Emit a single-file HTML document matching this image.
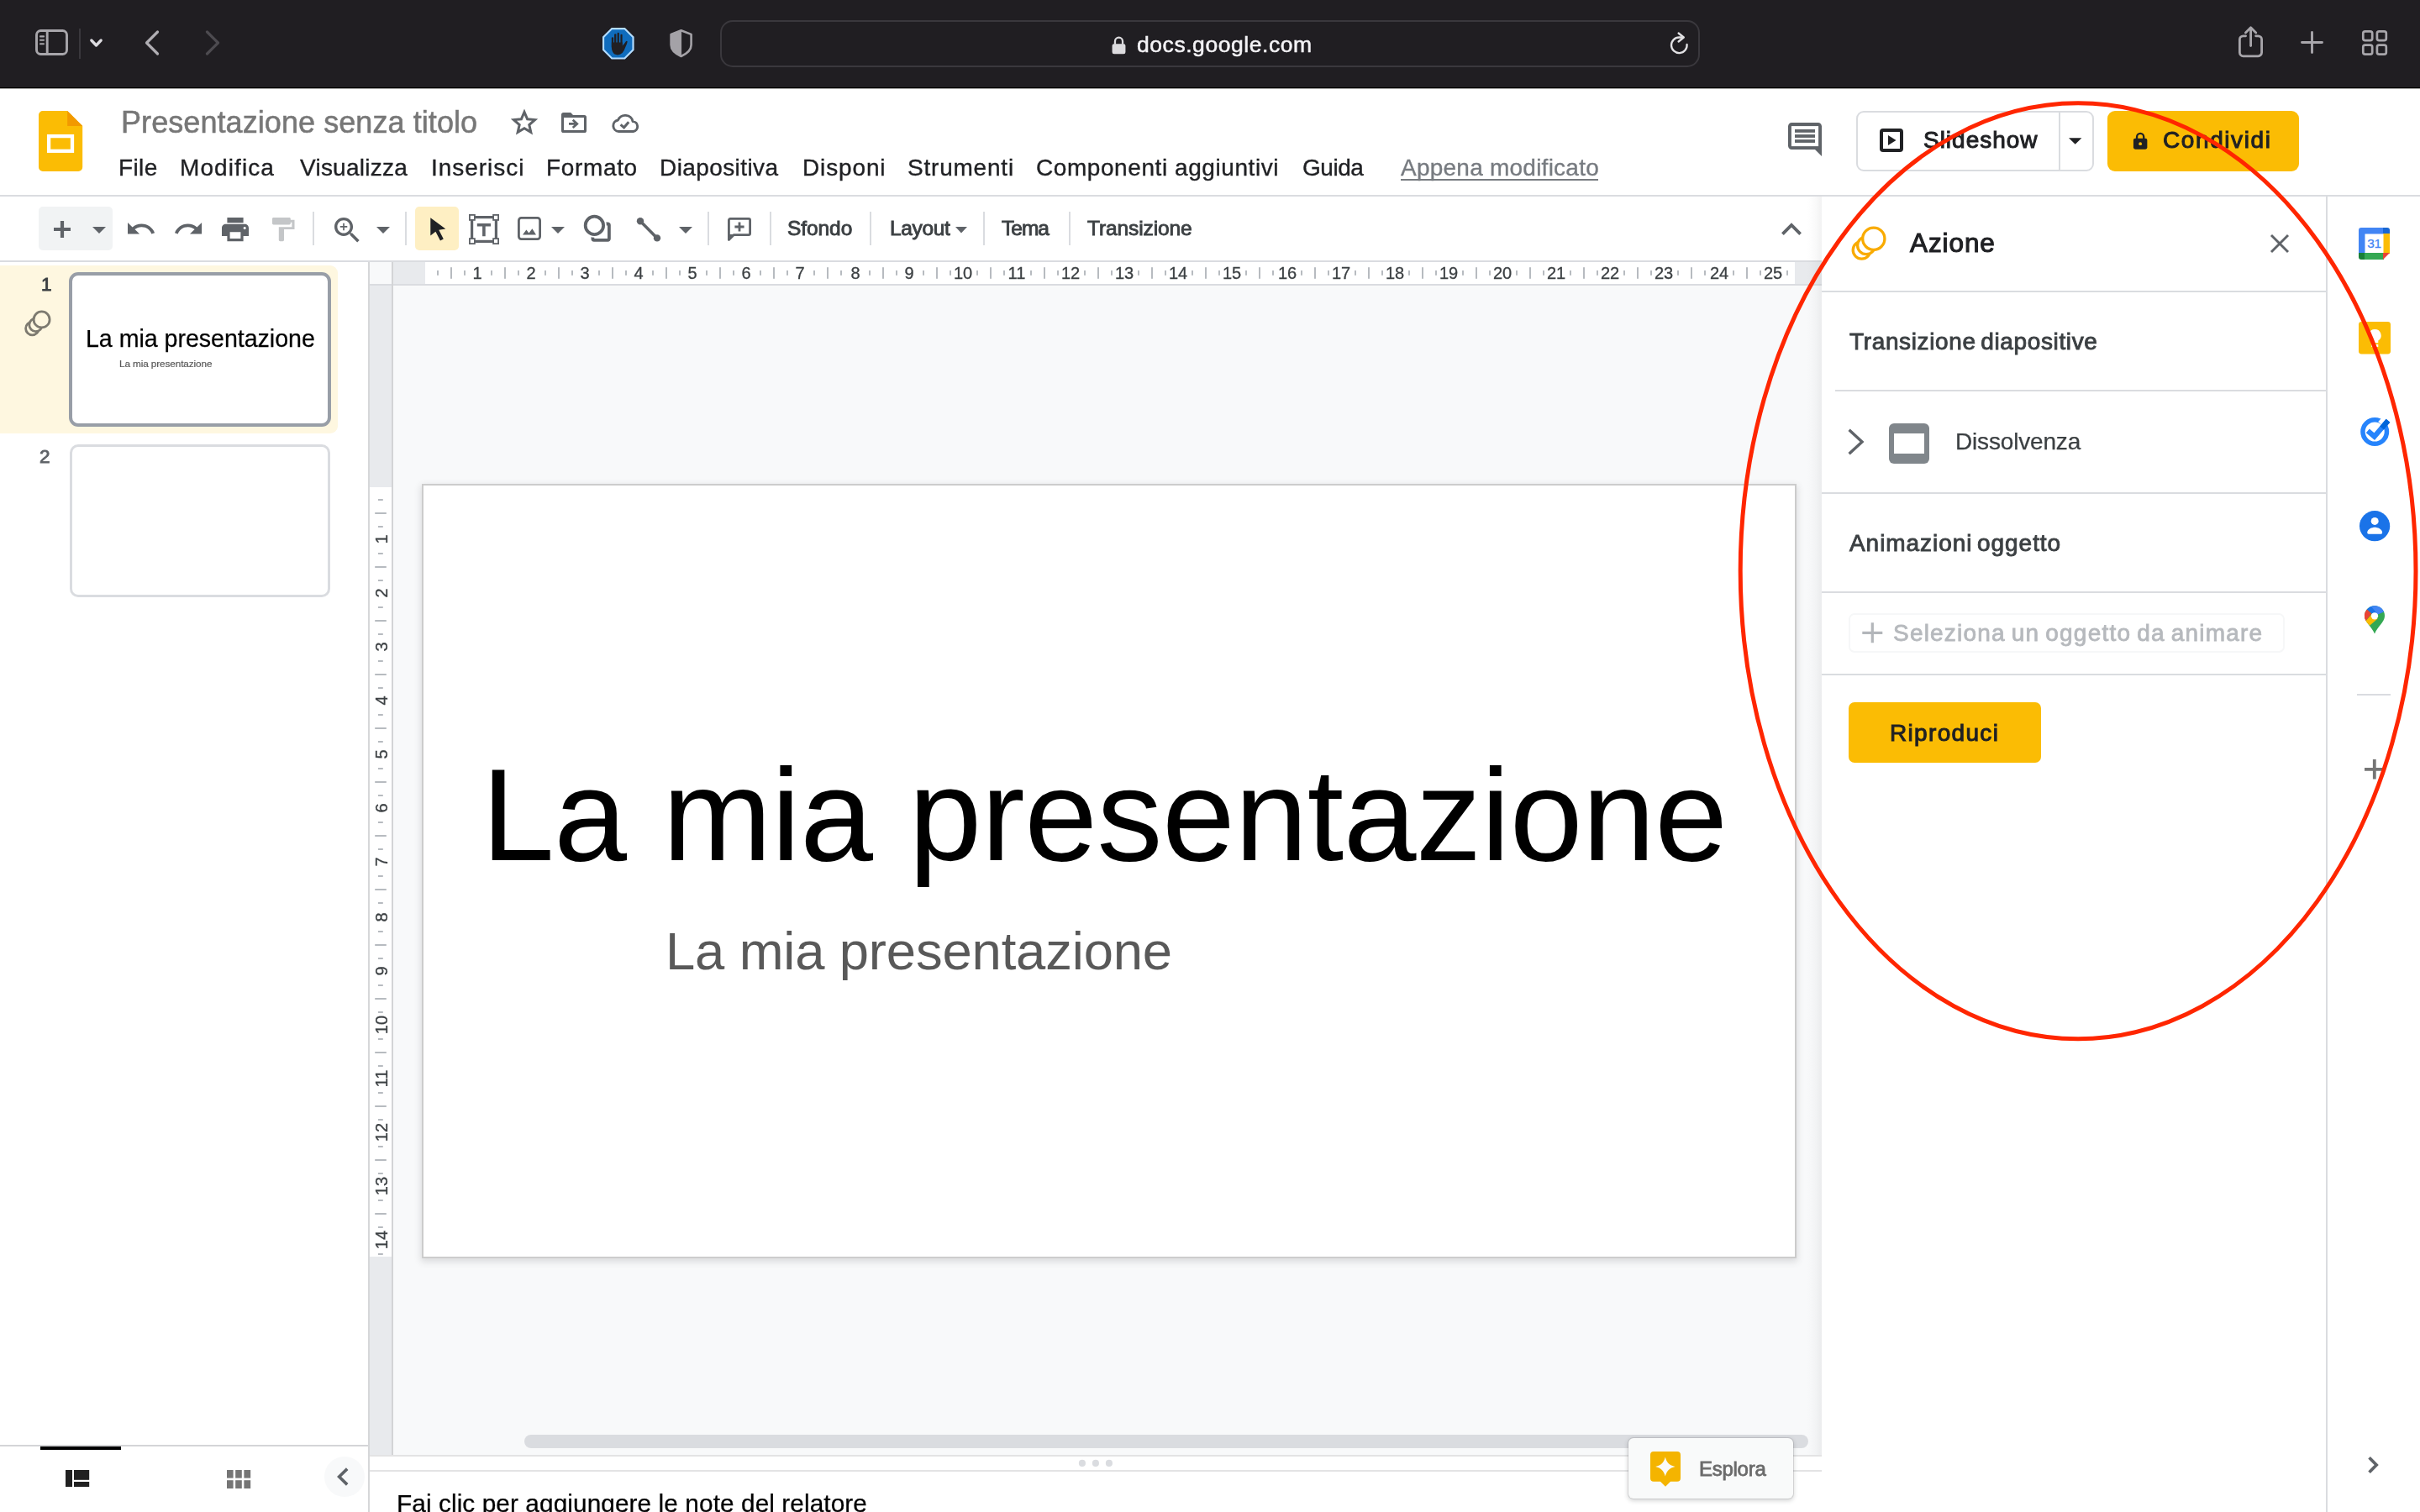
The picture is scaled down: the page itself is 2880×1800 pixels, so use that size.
<!DOCTYPE html>
<html lang="it">
<head>
<meta charset="utf-8">
<title>Presentazione senza titolo - Presentazioni Google</title>
<style>
html,body{margin:0;padding:0;}
body{width:2880px;height:1800px;overflow:hidden;position:relative;background:#fff;font-family:"Liberation Sans",sans-serif;color:#202124;}
.a{position:absolute;}
.t{position:absolute;white-space:pre;font-family:"Liberation Sans",sans-serif;will-change:transform;}
svg{position:absolute;overflow:visible;}
.sep{position:absolute;width:2px;background:#dadce0;top:252px;height:40px;}
.hl{position:absolute;height:2px;background:#dadce0;}
</style>
</head>
<body>
<!-- ============ Safari chrome ============ -->
<div class="a" style="left:0;top:0;width:2880px;height:104px;background:#201e22;"></div>
<div class="a" style="left:0;top:104px;width:2880px;height:1px;background:#000;"></div>
<div class="a" style="left:0;top:105px;width:2880px;height:1px;background:#a8a8a8;"></div>
<!-- sidebar icon -->
<svg style="left:41.8px;top:35.4px" width="39" height="31" viewBox="0 0 39 31" fill="none" stroke="#a8a6ab" stroke-width="2.9">
  <rect x="1.5" y="1.5" width="36" height="28" rx="5"/>
  <line x1="14.2" y1="2" x2="14.2" y2="29"/>
  <g stroke-width="2.1" stroke-linecap="round"><line x1="6" y1="8.4" x2="10" y2="8.4"/><line x1="6" y1="12.8" x2="10" y2="12.8"/><line x1="6" y1="17.2" x2="10" y2="17.2"/></g>
</svg>
<div class="a" style="left:94px;top:34px;width:2px;height:36px;background:#3a383d;"></div>
<svg style="left:106.6px;top:46.4px" width="15" height="11" viewBox="0 0 15 11" fill="none" stroke="#dddce0" stroke-width="3.3" stroke-linecap="round" stroke-linejoin="round"><path d="M1.8 2 L7.5 8 L13.2 2"/></svg>
<svg style="left:172px;top:36px" width="18" height="30" viewBox="0 0 18 30" fill="none" stroke="#b0aeb3" stroke-width="3.2" stroke-linecap="round" stroke-linejoin="round"><path d="M15.5 2 L2.5 15 L15.5 28"/></svg>
<svg style="left:244px;top:36px" width="18" height="30" viewBox="0 0 18 30" fill="none" stroke="#4d4b50" stroke-width="3.2" stroke-linecap="round" stroke-linejoin="round"><path d="M2.5 2 L15.5 15 L2.5 28"/></svg>
<!-- adblock octagon -->
<svg style="left:717.3px;top:33.3px" width="37.6" height="37.6" viewBox="0 0 38.2 38.2">
  <polygon points="11.4,1.1 26.8,1.1 37.1,11.4 37.1,26.8 26.8,37.1 11.4,37.1 1.1,26.8 1.1,11.4" fill="#0f6cbd" stroke="#b3dcff" stroke-width="2.2" stroke-linejoin="miter"/>
  <g fill="#211f23"><rect x="11" y="11.5" width="2.3" height="13" rx="1.15"/><rect x="14.3" y="7.3" width="2.3" height="14" rx="1.15"/><rect x="17.9" y="5.9" width="2.3" height="15" rx="1.15"/><rect x="21.8" y="7.8" width="2.2" height="14" rx="1.1"/>
  <path d="M11 17.8 H24 V21.8 Q26.5 19.6 28.2 16.8 Q29.4 15.2 30.1 16.4 Q30.2 18 27.9 23 Q26.2 28 24 30.4 Q21.5 32.9 18.3 32.9 Q14 32.9 12.2 29 Q11 26.5 11 23 Z"/></g>
</svg>
<!-- shield -->
<svg style="left:796px;top:34px" width="30" height="35" viewBox="0 0 30 35">
  <path d="M14.6 2.2 L26.6 6.9 V19.5 C26.6 25 22 29.6 14.6 33 C7.2 29.6 2.6 25 2.6 19.5 V6.9 Z" fill="none" stroke="#a4a2a7" stroke-width="2.6" stroke-linejoin="round"/>
  <path d="M14.6 2.2 L2.6 6.9 V19.5 C2.6 25 7.2 29.6 14.6 33 Z" fill="#a4a2a7" stroke="#a4a2a7" stroke-width="1" stroke-linejoin="round"/>
</svg>
<!-- URL field -->
<div class="a" style="left:857px;top:24px;width:1166px;height:56px;box-sizing:border-box;border:2px solid #3a383d;border-radius:15px;background:#201e22;"></div>
<svg style="left:1323.3px;top:41.6px" width="17" height="23.4" viewBox="0 0 18 24"><path d="M4.2 11 V7.2 a4.8 4.8 0 0 1 9.6 0 V11" fill="none" stroke="#dcdbde" stroke-width="2.4"/><rect x="0.6" y="10.4" width="16.8" height="12.8" rx="2.4" fill="#dcdbde"/></svg>
<div class="t" style="left:1353.0px;top:40.37px;font-size:26.5px;line-height:26.5px;letter-spacing:0.550px;color:#f4f3f6;-webkit-text-stroke:0.5px #f4f3f6;">docs.google.com</div>
<svg style="left:1987px;top:38px" width="24" height="28" viewBox="0 0 24 28" fill="none" stroke="#e2e1e4" stroke-width="2.3" stroke-linecap="round" stroke-linejoin="round">
  <path d="M20.55 14.8 A9.3 9.3 0 1 1 11.3 6.5 H16"/><path d="M10.6 1.5 L16.8 6.5 L10.6 11.5"/>
</svg>
<!-- share -->
<svg style="left:2663px;top:29.6px" width="32" height="40" viewBox="0 0 32 40" fill="none" stroke="#a8a6ab" stroke-width="2.8" stroke-linecap="round" stroke-linejoin="round">
  <path d="M9.6 12.8 H6.6 a4.2 4.2 0 0 0 -4.2 4.2 V32.6 a4.2 4.2 0 0 0 4.2 4.2 H24.4 a4.2 4.2 0 0 0 4.2 -4.2 V17 a4.2 4.2 0 0 0 -4.2 -4.2 H21.6"/>
  <path d="M15.6 24.6 V3.4"/><path d="M9.4 9 L15.6 2.8 L21.8 9"/>
</svg>
<svg style="left:2737px;top:36px" width="29" height="29" viewBox="0 0 29 29" fill="none" stroke="#a8a6ab" stroke-width="2.9" stroke-linecap="round"><path d="M14.5 2.5 V26.5 M2.5 14.5 H26.5"/></svg>
<svg style="left:2810px;top:35px" width="32" height="32" viewBox="0 0 32 32" fill="none" stroke="#a8a6ab" stroke-width="2.7">
  <rect x="2.3" y="2.3" width="10.9" height="10.9" rx="2.4"/><rect x="18.9" y="2.3" width="10.9" height="10.9" rx="2.4"/><rect x="2.3" y="18.7" width="10.9" height="10.9" rx="2.4"/><rect x="18.9" y="18.7" width="10.9" height="10.9" rx="2.4"/>
</svg>
<!-- ============ Docs header ============ -->
<div class="hl" style="left:0;top:232px;width:2880px;"></div>
<!-- slides logo -->
<svg style="left:46px;top:132px" width="52.2" height="72" viewBox="0 0 52.2 72">
  <path d="M5 0 H34.2 L52.2 18 V67 a5 5 0 0 1 -5 5 H5 a5 5 0 0 1 -5 -5 V5 a5 5 0 0 1 5 -5 Z" fill="#fbbc04"/>
  <path d="M34.2 0 L52.2 18 H34.2 Z" fill="#f29900"/>
  <rect x="12.1" y="30.1" width="27.9" height="17.7" fill="none" stroke="#fff" stroke-width="4.3"/>
</svg>
<div class="t" style="left:144.0px;top:127.93px;font-size:36px;line-height:36px;letter-spacing:0.072px;color:#777;-webkit-text-stroke:0.55px #777;">Presentazione senza titolo</div>
<!-- star -->
<svg style="left:608px;top:130.2px" width="32" height="30" viewBox="0 0 32 30" fill="none" stroke="#5f6368" stroke-width="3" stroke-linejoin="miter"><path d="M16 3.4 L19.6 11.8 L28.6 12.6 L21.8 18.6 L23.8 27.4 L16 22.8 L8.2 27.4 L10.2 18.6 L3.4 12.6 L12.4 11.8 Z"/></svg>
<!-- folder move -->
<svg style="left:668px;top:134px" width="30" height="24" viewBox="0 0 30 24"><path d="M2.6 0 H11.2 L14 3 H27.4 a2.6 2.6 0 0 1 2.6 2.6 V21.4 a2.6 2.6 0 0 1 -2.6 2.6 H2.6 a2.6 2.6 0 0 1 -2.6 -2.6 V2.6 a2.6 2.6 0 0 1 2.6 -2.6 Z M3 6 V21 H27 V6 Z" fill="#5f6368" fill-rule="evenodd"/><path d="M9 12 H16.4 V14.8 H9 Z M14.6 7.8 L20.8 13.4 L14.6 19 L12.8 17 L16.8 13.4 L12.8 9.8 Z" fill="#5f6368"/></svg>
<!-- cloud done -->
<svg style="left:727.6px;top:135px" width="33" height="23" viewBox="0 0 33 23" fill="none" stroke="#5f6368" stroke-width="2.9" stroke-linejoin="round"><path d="M8.3 21.5 a6.8 6.8 0 0 1 -0.8 -13.5 a9.3 9.3 0 0 1 17.6 1.6 a6 6 0 0 1 0.6 11.9 Z"/><path d="M10.6 13.4 L14.6 16.8 L20.2 10.2" stroke-linejoin="miter" stroke-width="3"/></svg>
<!-- menus -->
<div class="t" style="left:141.0px;top:186.10px;font-size:28px;line-height:28px;letter-spacing:0.400px;-webkit-text-stroke:0.35px #202124;">File</div>
<div class="t" style="left:214.4px;top:186.10px;font-size:28px;line-height:28px;letter-spacing:1.086px;-webkit-text-stroke:0.35px #202124;">Modifica</div>
<div class="t" style="left:356.8px;top:186.10px;font-size:28px;line-height:28px;letter-spacing:0.244px;-webkit-text-stroke:0.35px #202124;">Visualizza</div>
<div class="t" style="left:513.0px;top:186.10px;font-size:28px;line-height:28px;letter-spacing:0.975px;-webkit-text-stroke:0.35px #202124;">Inserisci</div>
<div class="t" style="left:649.6px;top:186.10px;font-size:28px;line-height:28px;letter-spacing:0.650px;-webkit-text-stroke:0.35px #202124;">Formato</div>
<div class="t" style="left:785.2px;top:186.10px;font-size:28px;line-height:28px;letter-spacing:0.410px;-webkit-text-stroke:0.35px #202124;">Diapositiva</div>
<div class="t" style="left:955.0px;top:186.10px;font-size:28px;line-height:28px;letter-spacing:0.867px;-webkit-text-stroke:0.35px #202124;">Disponi</div>
<div class="t" style="left:1080.3px;top:186.10px;font-size:28px;line-height:28px;letter-spacing:0.787px;-webkit-text-stroke:0.35px #202124;">Strumenti</div>
<div class="t" style="left:1233.4px;top:186.10px;font-size:28px;line-height:28px;letter-spacing:0.570px;-webkit-text-stroke:0.35px #202124;">Componenti aggiuntivi</div>
<div class="t" style="left:1550.0px;top:186.10px;font-size:28px;line-height:28px;letter-spacing:-0.475px;-webkit-text-stroke:0.35px #202124;">Guida</div>
<div class="t" style="left:1666.8px;top:186.10px;font-size:28px;line-height:28px;letter-spacing:0.237px;color:#777b80;-webkit-text-stroke:0.35px #777b80;">Appena modificato</div>
<div class="a" style="left:1667px;top:213px;width:235px;height:2px;background:#777b80;"></div>
<!-- comments icon -->
<svg style="left:2128px;top:146px" width="40" height="40" viewBox="0 0 40 40"><path d="M4.4 0 H35.6 a4.4 4.4 0 0 1 4.4 4.4 V39.9 L32 32 H4.4 a4.4 4.4 0 0 1 -4.4 -4.4 V4.4 a4.4 4.4 0 0 1 4.4 -4.4 Z" fill="#5f6368"/><rect x="3.9" y="4.1" width="32.2" height="24" fill="#fff"/><g fill="#5f6368"><rect x="8" y="8" width="24" height="3.8"/><rect x="8" y="14.1" width="24" height="3.8"/><rect x="8" y="20.1" width="24" height="3.8"/></g></svg>
<!-- slideshow button -->
<div class="a" style="left:2209px;top:132px;width:283px;height:72px;box-sizing:border-box;border:2px solid #dadce0;border-radius:9px;background:#fff;"></div>
<div class="a" style="left:2450px;top:133px;width:2px;height:70px;background:#dadce0;"></div>
<svg style="left:2237px;top:153px" width="28" height="28" viewBox="0 0 28 28"><rect x="2" y="2" width="24" height="24" rx="2" fill="none" stroke="#202124" stroke-width="4"/><path d="M10 8.1 L19.5 14 L10 19.9 Z" fill="#202124"/></svg>
<div class="t" style="left:2288.9px;top:153.30px;font-size:28px;line-height:28px;letter-spacing:0.988px;color:#202124;-webkit-text-stroke:1px #202124;">Slideshow</div>
<svg style="left:2462.4px;top:163.6px" width="15.4" height="8" viewBox="0 0 16 8"><path d="M0 0 H16 L8 8 Z" fill="#202124"/></svg>
<!-- share button -->
<div class="a" style="left:2508px;top:132px;width:228px;height:72px;border-radius:9px;background:#fbbc04;"></div>
<svg style="left:2538px;top:156.6px" width="18.3" height="21.4" viewBox="0 0 20 24"><path d="M5.4 9.5 V6.6 a4.6 4.6 0 0 1 9.2 0 V9.5" fill="none" stroke="#202124" stroke-width="2.6"/><rect x="0.8" y="8.6" width="18.4" height="14.6" rx="2.4" fill="#202124"/><circle cx="10" cy="15.9" r="2.1" fill="#fbbc04"/></svg>
<div class="t" style="left:2573.8px;top:153.30px;font-size:28px;line-height:28px;letter-spacing:1.587px;color:#202124;-webkit-text-stroke:1px #202124;">Condividi</div>
<!-- ============ Toolbar ============ -->
<div class="hl" style="left:0;top:310px;width:2168px;"></div>
<div class="a" style="left:46px;top:246px;width:88px;height:52px;border-radius:5px;background:#f1f3f4;"></div>
<svg style="left:64px;top:263px" width="20" height="20" viewBox="0 0 20 20"><path d="M7.9 0 H12.1 V7.9 H20 V12.1 H12.1 V20 H7.9 V12.1 H0 V7.9 H7.9 Z" fill="#5f6368"/></svg>
<svg style="left:110px;top:269.8px" width="16" height="8" viewBox="0 0 16 8"><path d="M0 0 H16 L8 8 Z" fill="#5f6368"/></svg>
<!-- undo / redo -->
<svg style="left:151.8px;top:265px" width="32.1" height="14.3" viewBox="2 7 20.47 9.5" preserveAspectRatio="none"><path d="M12.5 8c-2.65 0-5.05.99-6.9 2.6L2 7v9h9l-3.62-3.62c1.39-1.16 3.16-1.88 5.12-1.88 3.54 0 6.55 2.31 7.6 5.5l2.37-.78C21.08 11.03 17.15 8 12.5 8z" fill="#5f6368"/></svg>
<svg style="left:207.9px;top:265px" width="32.1" height="14.3" viewBox="1.54 7 20.46 9.5" preserveAspectRatio="none"><path d="M18.4 10.6C16.55 8.99 14.15 8 11.5 8c-4.65 0-8.58 3.03-9.96 7.22L3.9 16c1.05-3.19 4.05-5.5 7.6-5.5 1.95 0 3.73.72 5.12 1.88L13 16h9V7l-3.6 3.6z" fill="#5f6368"/></svg>
<!-- print -->
<svg style="left:264px;top:258.8px" width="32" height="28.2" viewBox="2 3 20 18" preserveAspectRatio="none"><path d="M19 8H5c-1.66 0-3 1.34-3 3v6h4v4h12v-4h4v-6c0-1.66-1.34-3-3-3zm-3 11H8v-5h8v5zm3-7c-.55 0-1-.45-1-1s.45-1 1-1 1 .45 1 1-.45 1-1 1zm-1-9H6v4h12V3z" fill="#5f6368"/></svg>
<!-- paint format (disabled) -->
<svg style="left:323.8px;top:258.8px" width="26.5" height="28.2" viewBox="4 2 17 20" preserveAspectRatio="none"><path d="M18 4V3c0-.55-.45-1-1-1H5c-.55 0-1 .45-1 1v4c0 .55.45 1 1 1h12c.55 0 1-.45 1-1V6h1v4H9v11c0 .55.45 1 1 1h2c.55 0 1-.45 1-1v-9h8V4h-3z" fill="#c4c6c8"/></svg>
<div class="sep" style="left:372px;"></div>
<!-- zoom -->
<svg style="left:397.8px;top:258.8px" width="29.7" height="29.5" viewBox="3 3 17.49 17.49" preserveAspectRatio="none"><path d="M15.5 14h-.79l-.28-.27C15.41 12.59 16 11.11 16 9.5 16 5.91 13.09 3 9.5 3S3 5.91 3 9.5 5.91 16 9.5 16c1.61 0 3.09-.59 4.23-1.57l.27.28v.79l5 4.99L20.49 19l-4.99-5zm-6 0C7.01 14 5 11.99 5 9.5S7.01 5 9.5 5 14 7.01 14 9.5 11.99 14 9.5 14z M12 10h-2v2H9v-2H7V9h2V7h1v2h2v1z" fill="#5f6368"/></svg>
<svg style="left:447.8px;top:269.8px" width="16" height="8" viewBox="0 0 16 8"><path d="M0 0 H16 L8 8 Z" fill="#5f6368"/></svg>
<div class="sep" style="left:482px;"></div>
<!-- select (active) -->
<div class="a" style="left:494px;top:246px;width:52px;height:52px;border-radius:5px;background:#feefc3;"></div>
<svg style="left:511.7px;top:258.8px" width="18.5" height="28.2" viewBox="0 0 18.5 28.2"><path d="M0.3 0.2 L18.3 13.6 L10.3 14.8 L15.8 25.4 L12 27.6 L6.4 16.8 L0.3 21.6 Z" fill="#202124"/></svg>
<!-- text box -->
<svg style="left:558px;top:255px" width="36" height="36" viewBox="0 0 36 36"><rect x="3.6" y="3.6" width="28.8" height="28.8" fill="none" stroke="#5f6368" stroke-width="3.2"/><g fill="#fff" stroke="#5f6368" stroke-width="1.8"><rect x="0.9" y="0.9" width="6" height="6"/><rect x="29.1" y="0.9" width="6" height="6"/><rect x="0.9" y="29.1" width="6" height="6"/><rect x="29.1" y="29.1" width="6" height="6"/></g><path d="M9.8 11 H26 V14.4 H19.7 V26.2 H16.1 V14.4 H9.8 Z" fill="#5f6368"/></svg>
<!-- image -->
<svg style="left:616px;top:258px" width="28" height="28" viewBox="0 0 28 28"><rect x="1.4" y="1.4" width="25.2" height="25.2" rx="3" fill="none" stroke="#5f6368" stroke-width="2.8"/><path d="M6 21.6 L10.4 15.6 L13.4 19.4 L17.4 14.2 L22 21.6 Z" fill="#5f6368"/></svg>
<svg style="left:656px;top:269.8px" width="16" height="8" viewBox="0 0 16 8"><path d="M0 0 H16 L8 8 Z" fill="#5f6368"/></svg>
<!-- shape -->
<svg style="left:694px;top:255px" width="34" height="34" viewBox="0 0 34 34" fill="none" stroke="#5f6368" stroke-width="3.8"><path d="M25 11.5 H29.4 a1.5 1.5 0 0 1 1.5 1.5 V29.3 a1.5 1.5 0 0 1 -1.5 1.5 H12.9 a1.5 1.5 0 0 1 -1.5 -1.5 V24" stroke-linecap="butt"/><circle cx="13.4" cy="13.4" r="10.7" stroke="#fff" stroke-width="7.4"/><circle cx="13.4" cy="13.4" r="10.7"/></svg>
<!-- line -->
<svg style="left:757px;top:257.5px" width="30" height="30" viewBox="0 0 30 30"><line x1="5" y1="5.2" x2="25" y2="25.4" stroke="#5f6368" stroke-width="3.6"/><circle cx="5" cy="5.2" r="4.2" fill="#5f6368"/><circle cx="25" cy="25.4" r="4.2" fill="#5f6368"/></svg>
<svg style="left:808px;top:269.8px" width="16" height="8" viewBox="0 0 16 8"><path d="M0 0 H16 L8 8 Z" fill="#5f6368"/></svg>
<div class="sep" style="left:842px;"></div>
<!-- add comment -->
<svg style="left:866px;top:258.8px" width="28" height="28.2" viewBox="0 0 28 28.2"><path d="M3 1.4 H25 a1.6 1.6 0 0 1 1.6 1.6 V19 a1.6 1.6 0 0 1 -1.6 1.6 H7.4 L1.4 26.6 V3 a1.6 1.6 0 0 1 1.6 -1.6 Z" fill="none" stroke="#5f6368" stroke-width="2.8" stroke-linejoin="round"/><path d="M1.4 27.6 V20 H9 Z" fill="#5f6368"/><path d="M12.6 5.4 H15.4 V9.6 H19.6 V12.4 H15.4 V16.6 H12.6 V12.4 H8.4 V9.6 H12.6 Z" fill="#5f6368"/></svg>
<div class="sep" style="left:916px;"></div>
<div class="t" style="left:937.4px;top:260.26px;font-size:24.5px;line-height:24.5px;letter-spacing:-0.080px;color:#3c4043;-webkit-text-stroke:0.9px #3c4043;">Sfondo</div>
<div class="sep" style="left:1035px;"></div>
<div class="t" style="left:1058.7px;top:260.26px;font-size:24.5px;line-height:24.5px;letter-spacing:-0.360px;color:#3c4043;-webkit-text-stroke:0.9px #3c4043;">Layout</div>
<svg style="left:1137px;top:270.4px" width="14" height="7.4" viewBox="0 0 14 7.4"><path d="M0 0 H14 L7 7.4 Z" fill="#5f6368"/></svg>
<div class="sep" style="left:1170px;"></div>
<div class="t" style="left:1192.0px;top:260.26px;font-size:24.5px;line-height:24.5px;letter-spacing:-1.000px;color:#3c4043;-webkit-text-stroke:0.9px #3c4043;">Tema</div>
<div class="sep" style="left:1272px;"></div>
<div class="t" style="left:1294.0px;top:260.26px;font-size:24.5px;line-height:24.5px;letter-spacing:-0.100px;color:#3c4043;-webkit-text-stroke:0.9px #3c4043;">Transizione</div>
<!-- collapse caret -->
<svg style="left:2120px;top:264.7px" width="24" height="15" viewBox="0 0 24 15" fill="none" stroke="#5f6368" stroke-width="3.8"><path d="M1.4 13.6 L12 3 L22.6 13.6"/></svg>
<!-- ============ Filmstrip ============ -->
<div class="a" style="left:0;top:316px;width:402px;height:200px;background:#fef7e0;border-radius:0 9px 9px 0;"></div>
<div class="t" style="left:48.5px;top:328.25px;font-size:22.5px;line-height:22.5px;color:#3c4043;-webkit-text-stroke:0.9px #3c4043;">1</div>
<svg style="left:28px;top:368px" width="34" height="34" viewBox="0 0 34 34" fill="#fef7e0" stroke="#7d7a70" stroke-width="2.8"><circle cx="10.4" cy="23" r="7.8"/><circle cx="14.6" cy="18.8" r="7.8"/><circle cx="21.6" cy="12.4" r="9.5"/></svg>
<div class="a" style="left:82px;top:324px;width:312px;height:184px;box-sizing:border-box;border:4px solid #989ea7;border-radius:11px;background:#fff;"></div>
<div class="t" style="left:101.8px;top:389.39px;font-size:28.6px;line-height:28.6px;letter-spacing:-0.032px;color:#000;-webkit-text-stroke:0.25px #000;">La mia presentazione</div>
<div class="t" style="left:141.8px;top:427.91px;font-size:11.8px;line-height:11.8px;letter-spacing:-0.121px;color:#595959;-webkit-text-stroke:0.2px #595959;">La mia presentazione</div>
<div class="t" style="left:47.2px;top:532.95px;font-size:22.5px;line-height:22.5px;color:#5f6368;-webkit-text-stroke:0.9px #5f6368;">2</div>
<div class="a" style="left:83px;top:529px;width:310px;height:182px;box-sizing:border-box;border:3px solid #dadce0;border-radius:10px;background:#fff;"></div>
<!-- filmstrip bottom bar -->
<div class="hl" style="left:0;top:1719.5px;width:438px;background:#d4d5d7;"></div>
<div class="a" style="left:48px;top:1722px;width:96px;height:4px;background:#000;"></div>
<svg style="left:78px;top:1750px" width="28.2" height="20" viewBox="0 0 28.2 20" fill="#212121"><rect x="0" y="0" width="8" height="20"/><rect x="10" y="0" width="18.2" height="11.8"/><rect x="10" y="14" width="18.2" height="6"/></svg>
<svg style="left:270px;top:1750px" width="28.2" height="22" viewBox="0 0 28.2 22" fill="#757575"><rect x="0" y="0" width="7.6" height="9.6"/><rect x="10.2" y="0" width="7.6" height="9.6"/><rect x="20.4" y="0" width="7.8" height="9.6"/><rect x="0" y="12.2" width="7.6" height="9.8"/><rect x="10.2" y="12.2" width="7.6" height="9.8"/><rect x="20.4" y="12.2" width="7.8" height="9.8"/></svg>
<div class="a" style="left:386px;top:1734px;width:48px;height:48px;border-radius:50%;background:#f8f9fa;"></div>
<svg style="left:400px;top:1746px" width="16" height="24" viewBox="0 0 16 24" fill="none" stroke="#5f6368" stroke-width="3.6"><path d="M13.2 2.6 L3.6 12 L13.2 21.4"/></svg>
<!-- divider -->
<div class="a" style="left:438px;top:312px;width:2px;height:1488px;background:#d6d7d9;"></div>
<!-- ============ Canvas area ============ -->
<div class="a" style="left:440px;top:312px;width:1728px;height:1421px;background:#f8f9fa;"></div>
<div class="a" style="left:468px;top:312px;width:1700px;height:26px;background:#e8eaed;"></div>
<div class="a" style="left:506px;top:312px;width:1630px;height:26px;background:#fff;"></div>
<div class="hl" style="left:440px;top:338px;width:1728px;background:#dadce0;"></div>
<div class="a" style="left:440px;top:340px;width:26px;height:1393px;background:#e8eaed;"></div>
<div class="a" style="left:440px;top:580px;width:26px;height:916px;background:#fff;"></div>
<div class="a" style="left:466px;top:312px;width:2px;height:1421px;background:#d3d4d6;"></div>
<svg style="left:0;top:0" width="2880" height="1800" viewBox="0 0 2880 1800"><g fill="#b7bbc0"><rect x="520" y="322" width="2" height="5.8"/><rect x="536" y="318.2" width="2" height="13.6"/><rect x="552" y="322" width="2" height="5.8"/><rect x="584" y="322" width="2" height="5.8"/><rect x="600" y="318.2" width="2" height="13.6"/><rect x="616" y="322" width="2" height="5.8"/><rect x="648" y="322" width="2" height="5.8"/><rect x="664" y="318.2" width="2" height="13.6"/><rect x="680" y="322" width="2" height="5.8"/><rect x="712" y="322" width="2" height="5.8"/><rect x="728" y="318.2" width="2" height="13.6"/><rect x="744" y="322" width="2" height="5.8"/><rect x="776" y="322" width="2" height="5.8"/><rect x="792" y="318.2" width="2" height="13.6"/><rect x="808" y="322" width="2" height="5.8"/><rect x="840" y="322" width="2" height="5.8"/><rect x="856" y="318.2" width="2" height="13.6"/><rect x="872" y="322" width="2" height="5.8"/><rect x="904" y="322" width="2" height="5.8"/><rect x="920" y="318.2" width="2" height="13.6"/><rect x="936" y="322" width="2" height="5.8"/><rect x="968" y="322" width="2" height="5.8"/><rect x="984" y="318.2" width="2" height="13.6"/><rect x="1000" y="322" width="2" height="5.8"/><rect x="1034" y="322" width="2" height="5.8"/><rect x="1050" y="318.2" width="2" height="13.6"/><rect x="1066" y="322" width="2" height="5.8"/><rect x="1098" y="322" width="2" height="5.8"/><rect x="1114" y="318.2" width="2" height="13.6"/><rect x="1130" y="322" width="2" height="5.8"/><rect x="1162" y="322" width="2" height="5.8"/><rect x="1178" y="318.2" width="2" height="13.6"/><rect x="1194" y="322" width="2" height="5.8"/><rect x="1226" y="322" width="2" height="5.8"/><rect x="1242" y="318.2" width="2" height="13.6"/><rect x="1258" y="322" width="2" height="5.8"/><rect x="1290" y="322" width="2" height="5.8"/><rect x="1306" y="318.2" width="2" height="13.6"/><rect x="1322" y="322" width="2" height="5.8"/><rect x="1354" y="322" width="2" height="5.8"/><rect x="1370" y="318.2" width="2" height="13.6"/><rect x="1386" y="322" width="2" height="5.8"/><rect x="1418" y="322" width="2" height="5.8"/><rect x="1434" y="318.2" width="2" height="13.6"/><rect x="1450" y="322" width="2" height="5.8"/><rect x="1482" y="322" width="2" height="5.8"/><rect x="1498" y="318.2" width="2" height="13.6"/><rect x="1514" y="322" width="2" height="5.8"/><rect x="1548" y="322" width="2" height="5.8"/><rect x="1564" y="318.2" width="2" height="13.6"/><rect x="1580" y="322" width="2" height="5.8"/><rect x="1612" y="322" width="2" height="5.8"/><rect x="1628" y="318.2" width="2" height="13.6"/><rect x="1644" y="322" width="2" height="5.8"/><rect x="1676" y="322" width="2" height="5.8"/><rect x="1692" y="318.2" width="2" height="13.6"/><rect x="1708" y="322" width="2" height="5.8"/><rect x="1740" y="322" width="2" height="5.8"/><rect x="1756" y="318.2" width="2" height="13.6"/><rect x="1772" y="322" width="2" height="5.8"/><rect x="1804" y="322" width="2" height="5.8"/><rect x="1820" y="318.2" width="2" height="13.6"/><rect x="1836" y="322" width="2" height="5.8"/><rect x="1868" y="322" width="2" height="5.8"/><rect x="1884" y="318.2" width="2" height="13.6"/><rect x="1900" y="322" width="2" height="5.8"/><rect x="1932" y="322" width="2" height="5.8"/><rect x="1948" y="318.2" width="2" height="13.6"/><rect x="1964" y="322" width="2" height="5.8"/><rect x="1996" y="322" width="2" height="5.8"/><rect x="2012" y="318.2" width="2" height="13.6"/><rect x="2028" y="322" width="2" height="5.8"/><rect x="2062" y="322" width="2" height="5.8"/><rect x="2078" y="318.2" width="2" height="13.6"/><rect x="2094" y="322" width="2" height="5.8"/><rect x="2126" y="322" width="2" height="5.8"/><rect x="450" y="594" width="5.8" height="2"/><rect x="446.2" y="610" width="13.6" height="2"/><rect x="450" y="626" width="5.8" height="2"/><rect x="450" y="658" width="5.8" height="2"/><rect x="446.2" y="674" width="13.6" height="2"/><rect x="450" y="690" width="5.8" height="2"/><rect x="450" y="722" width="5.8" height="2"/><rect x="446.2" y="738" width="13.6" height="2"/><rect x="450" y="754" width="5.8" height="2"/><rect x="450" y="786" width="5.8" height="2"/><rect x="446.2" y="802" width="13.6" height="2"/><rect x="450" y="818" width="5.8" height="2"/><rect x="450" y="850" width="5.8" height="2"/><rect x="446.2" y="866" width="13.6" height="2"/><rect x="450" y="882" width="5.8" height="2"/><rect x="450" y="914" width="5.8" height="2"/><rect x="446.2" y="930" width="13.6" height="2"/><rect x="450" y="946" width="5.8" height="2"/><rect x="450" y="978" width="5.8" height="2"/><rect x="446.2" y="994" width="13.6" height="2"/><rect x="450" y="1010" width="5.8" height="2"/><rect x="450" y="1042" width="5.8" height="2"/><rect x="446.2" y="1058" width="13.6" height="2"/><rect x="450" y="1074" width="5.8" height="2"/><rect x="450" y="1108" width="5.8" height="2"/><rect x="446.2" y="1124" width="13.6" height="2"/><rect x="450" y="1140" width="5.8" height="2"/><rect x="450" y="1172" width="5.8" height="2"/><rect x="446.2" y="1188" width="13.6" height="2"/><rect x="450" y="1204" width="5.8" height="2"/><rect x="450" y="1236" width="5.8" height="2"/><rect x="446.2" y="1252" width="13.6" height="2"/><rect x="450" y="1268" width="5.8" height="2"/><rect x="450" y="1300" width="5.8" height="2"/><rect x="446.2" y="1316" width="13.6" height="2"/><rect x="450" y="1332" width="5.8" height="2"/><rect x="450" y="1364" width="5.8" height="2"/><rect x="446.2" y="1380" width="13.6" height="2"/><rect x="450" y="1396" width="5.8" height="2"/><rect x="450" y="1428" width="5.8" height="2"/><rect x="446.2" y="1444" width="13.6" height="2"/><rect x="450" y="1460" width="5.8" height="2"/><rect x="450" y="1492" width="5.8" height="2"/></g><g font-family="Liberation Sans, sans-serif" font-size="20" fill="#3c4043" stroke="#3c4043" stroke-width="0.3" text-anchor="middle"><text x="568" y="332">1</text><text x="632" y="332">2</text><text x="696" y="332">3</text><text x="760" y="332">4</text><text x="824" y="332">5</text><text x="888" y="332">6</text><text x="952" y="332">7</text><text x="1018" y="332">8</text><text x="1082" y="332">9</text><text x="1146" y="332">10</text><text x="1210" y="332">11</text><text x="1274" y="332">12</text><text x="1338" y="332">13</text><text x="1402" y="332">14</text><text x="1466" y="332">15</text><text x="1532" y="332">16</text><text x="1596" y="332">17</text><text x="1660" y="332">18</text><text x="1724" y="332">19</text><text x="1788" y="332">20</text><text x="1852" y="332">21</text><text x="1916" y="332">22</text><text x="1980" y="332">23</text><text x="2046" y="332">24</text><text x="2110" y="332">25</text><text transform="translate(461.2 642) rotate(-90)" x="0" y="0">1</text><text transform="translate(461.2 706) rotate(-90)" x="0" y="0">2</text><text transform="translate(461.2 770) rotate(-90)" x="0" y="0">3</text><text transform="translate(461.2 834) rotate(-90)" x="0" y="0">4</text><text transform="translate(461.2 898) rotate(-90)" x="0" y="0">5</text><text transform="translate(461.2 962) rotate(-90)" x="0" y="0">6</text><text transform="translate(461.2 1026) rotate(-90)" x="0" y="0">7</text><text transform="translate(461.2 1092) rotate(-90)" x="0" y="0">8</text><text transform="translate(461.2 1156) rotate(-90)" x="0" y="0">9</text><text transform="translate(461.2 1220) rotate(-90)" x="0" y="0">10</text><text transform="translate(461.2 1284) rotate(-90)" x="0" y="0">11</text><text transform="translate(461.2 1348) rotate(-90)" x="0" y="0">12</text><text transform="translate(461.2 1412) rotate(-90)" x="0" y="0">13</text><text transform="translate(461.2 1476) rotate(-90)" x="0" y="0">14</text></g></svg>
<div class="a" style="left:502px;top:576px;width:1636px;height:922px;box-sizing:border-box;border:2px solid #ccc;background:#fff;box-shadow:0 3px 8px 1px rgba(60,64,67,.16);"></div>
<div class="t" style="left:573.0px;top:891.95px;font-size:156px;line-height:156px;letter-spacing:-0.447px;color:#000;">La mia presentazione</div>
<div class="t" style="left:791.7px;top:1101.13px;font-size:63.4px;line-height:63.4px;letter-spacing:-0.158px;color:#595959;">La mia presentazione</div>
<div class="a" style="left:624px;top:1708px;width:1528px;height:16px;border-radius:8px;background:#dadce0;"></div>
<!-- ============ Motion (Azione) panel ============ -->
<div class="a" style="left:2150px;top:234px;width:18px;height:1566px;background:linear-gradient(to right,rgba(60,64,67,0) 0%,rgba(60,64,67,.02) 50%,rgba(60,64,67,.065) 100%);"></div>
<div class="a" style="left:2168px;top:234px;width:600px;height:1566px;background:#fff;"></div>
<div class="a" style="left:2768px;top:234px;width:2px;height:1566px;background:#dadce0;"></div>
<div class="a" style="left:2770px;top:234px;width:110px;height:1566px;background:#fff;"></div>
<!-- motion icon -->
<svg style="left:2203px;top:269px" width="43" height="42" viewBox="0 0 43 42" fill="#fff" stroke="#f9ab00" stroke-width="3.3"><circle cx="12.6" cy="28.8" r="10.4"/><circle cx="18" cy="23.2" r="10.4"/><circle cx="26.8" cy="15.2" r="13.1"/></svg>
<div class="t" style="left:2272.7px;top:273.54px;font-size:31.5px;line-height:31.5px;letter-spacing:0.900px;color:#202124;-webkit-text-stroke:1.1px #202124;">Azione</div>
<svg style="left:2702.2px;top:279.2px" width="22" height="22" viewBox="0 0 22 22" stroke="#5f6368" stroke-width="2.9"><path d="M1 1 L21 21 M21 1 L1 21"/></svg>
<div class="hl" style="left:2168px;top:346px;width:600px;"></div>
<div class="t" style="left:2201.0px;top:392.60px;font-size:28px;line-height:28px;letter-spacing:0.641px;color:#3c4043;-webkit-text-stroke:0.9px #3c4043;word-spacing:-3px;">Transizione diapositive</div>
<div class="hl" style="left:2184px;top:464px;width:584px;"></div>
<svg style="left:2198px;top:510px" width="22" height="32" viewBox="0 0 22 32" fill="none" stroke="#5f6368" stroke-width="3.4"><path d="M2.6 1.8 L18 16 L2.6 30.2"/></svg>
<div class="a" style="left:2247.5px;top:504px;width:48.5px;height:48px;border-radius:6px;background:#80868b;"></div>
<div class="a" style="left:2254px;top:515.5px;width:36px;height:24.5px;background:#fff;"></div>
<div class="t" style="left:2327.1px;top:511.60px;font-size:28px;line-height:28px;letter-spacing:-0.170px;color:#3c4043;-webkit-text-stroke:0.25px #3c4043;">Dissolvenza</div>
<div class="hl" style="left:2168px;top:586px;width:600px;"></div>
<div class="t" style="left:2201.0px;top:632.70px;font-size:28px;line-height:28px;letter-spacing:0.941px;color:#3c4043;-webkit-text-stroke:0.9px #3c4043;word-spacing:-3px;">Animazioni oggetto</div>
<div class="hl" style="left:2168px;top:704px;width:600px;"></div>
<div class="a" style="left:2200px;top:730px;width:519px;height:47px;box-sizing:border-box;border:2px solid #f6f7f8;border-radius:7px;"></div>
<svg style="left:2216px;top:741px" width="25" height="25" viewBox="0 0 25 25" stroke="#b3b6ba" stroke-width="3.2"><path d="M12.3 0.3 V24.3 M0.3 12.3 H24.3"/></svg>
<div class="t" style="left:2253.3px;top:740.40px;font-size:28px;line-height:28px;letter-spacing:1.203px;color:#b6b9bd;-webkit-text-stroke:0.8px #b6b9bd;word-spacing:-2px;">Seleziona un oggetto da animare</div>
<div class="hl" style="left:2168px;top:802px;width:600px;"></div>
<div class="a" style="left:2200px;top:836px;width:229px;height:71.5px;border-radius:7px;background:#fbbc04;"></div>
<div class="t" style="left:2249.4px;top:858.70px;font-size:28px;line-height:28px;letter-spacing:1.325px;color:#202124;-webkit-text-stroke:1px #202124;">Riproduci</div>
<!-- side panel icons -->
<!-- calendar -->
<svg style="left:2807px;top:271px" width="37" height="38" viewBox="0 0 37 38">
  <path d="M3 0 H30 V8 H8 V30 H0 V3 a3 3 0 0 1 3 -3 Z" fill="#4285f4"/>
  <path d="M29 0 H34 a3 3 0 0 1 3 3 V8 H29 Z" fill="#1967d2"/>
  <rect x="29" y="7" width="8" height="24" fill="#fbbc04"/>
  <path d="M0 30 H8 V38 H3 a3 3 0 0 1 -3 -3 Z" fill="#188038"/>
  <rect x="7" y="30" width="23" height="8" fill="#34a853"/>
  <path d="M29 30 H37 L29 38 Z" fill="#ea4335"/>
  <rect x="7.5" y="7.5" width="22" height="22.5" fill="#fff"/>
  <text x="18.4" y="23.8" font-family="Liberation Sans, sans-serif" font-size="15.4" fill="#4285f4" stroke="#4285f4" stroke-width="0.25" text-anchor="middle" letter-spacing="-0.5">31</text>
</svg>
<!-- keep -->
<svg style="left:2807px;top:382.8px" width="38" height="38.5" viewBox="0 0 38 38.5"><rect x="0" y="0" width="38" height="38.5" rx="3.4" fill="#fbbc04"/><path d="M19.3 9 a7.4 7.4 0 0 1 4 13.6 V25.2 H15.3 V22.6 A7.4 7.4 0 0 1 19.3 9 Z" fill="#fff"/><rect x="15.3" y="27" width="8" height="3" fill="#fff"/></svg>
<!-- tasks -->
<svg style="left:2806px;top:493px" width="42" height="42" viewBox="0 0 42 42"><circle cx="20.2" cy="21" r="14.25" fill="none" stroke="#2684fc" stroke-width="5.5"/><path d="M28 12.4 L38.4 0.8" fill="none" stroke="#fff" stroke-width="10"/><path d="M11.8 19.8 L19.7 26.7 L36 7.8" fill="none" stroke="#2684fc" stroke-width="6.2" stroke-linejoin="miter"/><path d="M28.6 16.4 L36 7.8" fill="none" stroke="#0066da" stroke-width="6.2"/></svg>
<!-- contacts -->
<svg style="left:2807.9px;top:608px" width="36.2" height="36.4" viewBox="0 0 37 37"><circle cx="18.5" cy="18.5" r="18.5" fill="#1a73e8"/><circle cx="18.6" cy="12.6" r="4.6" fill="#fff"/><path d="M9.4 26.6 c0 -4.6 6 -6.6 9.2 -6.6 s9.2 2 9.2 6.6 a1.6 1.6 0 0 1 -1.6 1.6 H11 a1.6 1.6 0 0 1 -1.6 -1.6 Z" fill="#fff"/></svg>
<!-- maps -->
<svg style="left:2814.2px;top:721.2px" width="24" height="33.8" viewBox="0 0 26 36">
  <path d="M13 0 A13 13 0 0 1 26 13 C26 21 16.5 27 13 36 C9.5 27 0 21 0 13 A13 13 0 0 1 13 0 Z" fill="#34a853"/>
  <path d="M13 0 A13 13 0 0 1 24.8 7.5 L13 13 L3 4.7 A13 13 0 0 1 13 0 Z" fill="#1a73e8"/>
  <path d="M13 0 A13 13 0 0 1 24.8 7.5 L17 11 L9 1 A13 13 0 0 1 13 0 Z" fill="#4285f4"/>
  <path d="M3 4.7 L9 10 L1.7 19.4 A13 13 0 0 1 3 4.7 Z" fill="#ea4335"/>
  <path d="M1.7 19.4 L9.6 10.2 L17 16.4 L6.6 25.4 C4.4 22.8 2.6 21 1.7 19.4 Z" fill="#fbbc04"/>
  <circle cx="13" cy="13" r="4.5" fill="#fff"/>
</svg>
<div class="hl" style="left:2805px;top:826px;width:40px;"></div>
<svg style="left:2814.2px;top:904.2px" width="23.6" height="23.6" viewBox="0 0 23.6 23.6" stroke="#757575" stroke-width="3.8"><path d="M11.8 0 V23.6 M0 11.8 H23.6"/></svg>
<svg style="left:2818px;top:1733px" width="14" height="22" viewBox="0 0 14 22" fill="none" stroke="#5f6368" stroke-width="3.7"><path d="M1.6 2.2 L10.2 11 L1.6 19.8"/></svg>
<!-- ============ Speaker notes ============ -->
<div class="a" style="left:440px;top:1733px;width:1728px;height:67px;background:#fff;"></div>
<div class="hl" style="left:440px;top:1732px;width:1728px;background:#e3e3e4;"></div>
<div class="hl" style="left:440px;top:1750px;width:1728px;background:#e3e3e4;"></div>
<svg style="left:1283px;top:1737px" width="42" height="10" viewBox="0 0 42 10" fill="#dadce0"><circle cx="4.9" cy="4.9" r="4.05"/><circle cx="20.9" cy="4.9" r="4.05"/><circle cx="36.9" cy="4.9" r="4.05"/></svg>
<div class="t" style="left:471.9px;top:1775.47px;font-size:29.8px;line-height:29.8px;letter-spacing:0.079px;color:#000;-webkit-text-stroke:0.25px #000;">Fai clic per aggiungere le note del relatore</div>
<!-- explore -->
<div class="a" style="left:1938px;top:1712px;width:196px;height:72px;border-radius:6px;background:#f9fafa;box-shadow:0 0 0 1px rgba(60,64,67,.13),0 2px 5px 1px rgba(60,64,67,.2);"></div>
<svg style="left:1964px;top:1728px" width="36" height="42" viewBox="0 0 36 42"><path d="M4 0 H32 a4 4 0 0 1 4 4 V31.8 a4 4 0 0 1 -4 4 H24 L18 41.8 L12 35.8 H4 a4 4 0 0 1 -4 -4 V4 a4 4 0 0 1 4 -4 Z" fill="#f4b400"/><path d="M17.8 6.4 C19.6 13.2 22.6 16.2 29.6 18 C22.6 19.8 19.6 22.8 17.8 29.6 C16 22.8 13 19.8 6.2 18 C13 16.2 16 13.2 17.8 6.4 Z" fill="#fafafa"/></svg>
<div class="t" style="left:2022.3px;top:1736.98px;font-size:24px;line-height:24px;letter-spacing:-0.267px;color:#6b6b6b;-webkit-text-stroke:0.8px #6b6b6b;">Esplora</div>
<!-- ============ red annotation ellipse ============ -->
<svg style="left:0;top:0" width="2880" height="1800" viewBox="0 0 2880 1800"><ellipse cx="2473.1" cy="679.8" rx="401.9" ry="557" fill="none" stroke="#ff2600" stroke-width="5"/></svg>
<script>
(function(){var w=window.innerWidth;if(w&&w<2880){document.documentElement.style.zoom=String(w/2880);}})();
</script>
</body>
</html>
